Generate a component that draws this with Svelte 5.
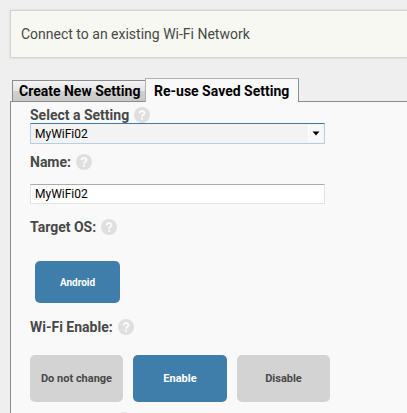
<script>
  const settings = ['MyWiFi02'];
  const modes = ['Do not change', 'Enable', 'Disable'];
  let mode = $state('Enable');
  let name = $state('MyWiFi02');
</script>

{#snippet help()}
  <svg class="help" width="16" height="16" viewBox="0 0 16 16" aria-hidden="true">
    <circle cx="8" cy="8" r="8" fill="#dfdfdf" />
    <path d="M5.7 6.3C5.7 3.1 10.5 3.2 10.5 6C10.5 7.8 8 7.8 8 9.7" fill="none" stroke="#fbfbfb" stroke-width="2" />
    <rect x="7" y="10.8" width="2" height="2" fill="#fbfbfb" />
  </svg>
{/snippet}

<div class="page">
  <header class="banner">Connect to an existing Wi-Fi Network</header>
  <nav class="tabs">
    <button class="tab">Create New Setting</button>
    <button class="tab active">Re-use Saved Setting</button>
  </nav>
  <main class="panel">
    <div class="label first"><span>Select a Setting</span>{@render help()}</div>
    <div class="select">
      <span>{settings[0]}</span>
      <i><svg width="8" height="5" viewBox="0 0 8 5"><path d="M0.5 0.5H7.5L4 4.5Z" fill="#000" /></svg></i>
    </div>
    <div class="label name"><span>Name:</span>{@render help()}</div>
    <input bind:value={name} />
    <div class="label os"><span>Target OS:</span>{@render help()}</div>
    <button class="choice on android">Android</button>
    <div class="label enable"><span>Wi-Fi Enable:</span>{@render help()}</div>
    <div class="choices">
      {#each modes as item}
        <button class="choice" class:on={item === mode} onclick={() => (mode = item)}>{item}</button>
      {/each}
    </div>
    <div class="next">{@render help()}</div>
  </main>
</div>

<style>
  :global(body) { margin: 0; }
  .page, button, input { font-family: Roboto, "Liberation Sans", sans-serif; }
  .page, .page * { box-sizing: border-box; }
  .page {
    width: 407px; height: 413px; overflow: hidden; background: #efefef;
    padding-top: 10px; display: flex; flex-direction: column;
  }
  .banner {
    flex: none; height: 48px; margin-left: 10px; padding-left: 10px;
    border: 1px solid #d5d5d3; border-right: 0;
    background: #f7f8f1; color: #484848; font-size: 14px; line-height: 47px;
    box-shadow: 0 0 2px #cfcfcf; white-space: nowrap;
  }
  .tabs { display: flex; flex: none; align-items: flex-end; height: 44px; padding-left: 12px; margin-bottom: -1px; position: relative; }
  .tab {
    height: 22px; width: 134px; padding: 0 0 0 6px; margin: 0; text-align: left; white-space: nowrap;
    border: 1px solid #8b8c91; background: linear-gradient(#f4f4f4, #e4e4e4 48%, #d0d0d0 52%, #c8c8c8);
    color: #000; font-size: 14px; font-weight: 700; line-height: 20px;
  }
  .tab.active {
    height: 24px; width: 154px; margin-left: -1px; padding-left: 8px; border-bottom: 0;
    border-top-color: #b0b1b3; border-left-color: #b0b1b3; background: #f9f9f9; line-height: 22px;
  }
  .panel {
    flex: 1; margin-left: 10px; padding: 4px 0 0 19px; min-height: 0;
    border: solid #8b8c91; border-width: 1px 0 0 1px; background: #f9f9f9;
  }
  .label { display: flex; gap: 5px; align-items: center; height: 18px; color: #484848; font-size: 14px; font-weight: 700; white-space: nowrap; }
  .first { margin-bottom: -1px; }
  .help { display: block; flex: none; }
  .select {
    display: flex; justify-content: space-between; width: 295px; height: 21px; padding: 1px 1px 1px 4px;
    border: 1px solid #b5cfe7; border-top-color: #3d7bad; background: #f3f3f3;
    color: #000; font-size: 12px; line-height: 18px;
  }
  .select i { width: 15px; border-left: 1px solid #fff; background: #f8f8f8; display: flex; align-items: center; justify-content: center; }
  .select i svg { display: block; }
  .name { margin-top: 9px; }
  input {
    display: block; width: 295px; height: 20px; margin: 13px 0 0; padding: 0 4px;
    border: 1px solid #e3e3e6; border-top-color: #ababb3; background: #fff; color: #000; font-size: 12px; outline: 0;
  }
  .os { margin-top: 14px; }
  .choice { width: 93px; height: 47px; padding: 0; border: 0; border-radius: 5px; background: #d3d3d3; color: #484848; font-size: 11px; font-weight: 700; }
  .choice.on { background: #3f7eaa; color: #fff; }
  .android { display: block; width: 85px; height: 42px; margin: 25px 0 0 5px; font-size: 10px; }
  .enable { margin-top: 15px; }
  .choices { display: grid; grid-template-columns: 93px 94px 93px; gap: 10px; margin-top: 19px; }
  .choices .choice { width: 100%; }
  .next { padding: 10px 0 0 86px; }
</style>
